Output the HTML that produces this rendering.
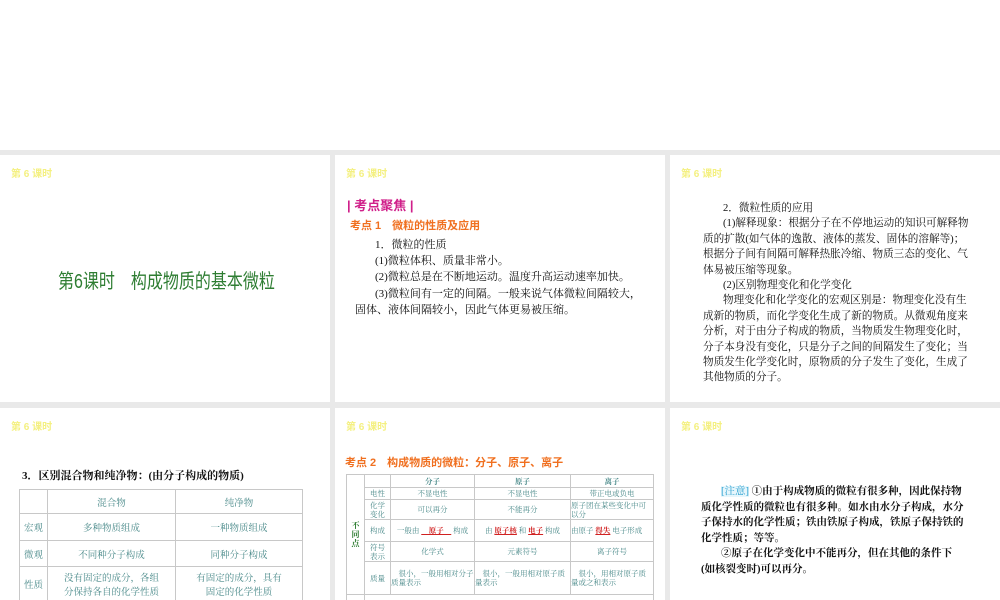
<!DOCTYPE html>
<html><head><meta charset="utf-8"><style>
*{margin:0;padding:0;box-sizing:border-box}
body{width:1000px;height:600px;background:#fff;position:relative;overflow:hidden;font-family:"Liberation Serif","Noto Serif CJK SC",serif;color:#111}
.band{position:absolute;left:0;top:150px;width:1000px;height:450px;background:#e9e9e9}
.s{position:absolute;background:#fff;overflow:hidden}
.h{position:absolute;left:11px;top:10px;font:bold 10px "Liberation Sans","Noto Sans CJK SC",sans-serif;color:#f4f080}
.t{position:absolute;font-size:11px;line-height:16.2px;white-space:nowrap}
.a{position:absolute;font-family:"Liberation Sans","Noto Sans CJK SC",sans-serif;font-weight:bold;white-space:nowrap}
table{border-collapse:collapse;position:absolute}
td{border:1px solid #c8c8c8;text-align:center;color:#4a8a8a;font-size:9.5px}
.t5 td{font-size:7.5px;line-height:9px}
.r{color:#d02020;text-decoration:underline;font-weight:bold}
</style></head><body>
<div class="band"></div>
<div class="s" style="left:0;top:155px;width:330px;height:247px">
<div class="h">第 6 课时</div>
<div class="a" style="left:58px;top:110px;font-size:20px;color:#2e7d32;font-weight:normal;transform:scaleX(0.8);transform-origin:left top">第6课时　构成物质的基本微粒</div>
</div>
<div class="s" style="left:335px;top:155px;width:330px;height:247px">
<div class="h">第 6 课时</div>
<div class="a" style="left:12px;top:40px;font-size:13px;color:#d0208a">| 考点聚焦 |</div>
<div class="a" style="left:15px;top:62px;font-size:11px;color:#f07020">考点 1　微粒的性质及应用</div>
<div class="t" style="left:20px;top:82px">
<div style="padding-left:20px">1．微粒的性质</div>
<div style="padding-left:20px">(1)微粒体积、质量非常小。</div>
<div style="padding-left:20px">(2)微粒总是在不断地运动。温度升高运动速率加快。</div>
<div style="padding-left:20px">(3)微粒间有一定的间隔。一般来说气体微粒间隔较大，</div>
<div>固体、液体间隔较小，因此气体更易被压缩。</div>
</div>
</div>
<div class="s" style="left:670px;top:155px;width:330px;height:247px">
<div class="h">第 6 课时</div>
<div class="t" style="left:33px;top:46px;font-size:10.6px;line-height:15.4px">
<div style="padding-left:20px">2．微粒性质的应用</div>
<div style="padding-left:20px">(1)解释现象：根据分子在不停地运动的知识可解释物</div>
<div>质的扩散(如气体的逸散、液体的蒸发、固体的溶解等)；</div>
<div>根据分子间有间隔可解释热胀冷缩、物质三态的变化、气</div>
<div>体易被压缩等现象。</div>
<div style="padding-left:20px">(2)区别物理变化和化学变化</div>
<div style="padding-left:20px">物理变化和化学变化的宏观区别是：物理变化没有生</div>
<div>成新的物质，而化学变化生成了新的物质。从微观角度来</div>
<div>分析，对于由分子构成的物质，当物质发生物理变化时，</div>
<div>分子本身没有变化，只是分子之间的间隔发生了变化；当</div>
<div>物质发生化学变化时，原物质的分子发生了变化，生成了</div>
<div>其他物质的分子。</div>
</div>
</div>
<div class="s" style="left:0;top:408px;width:330px;height:192px">
<div class="h">第 6 课时</div>
<div class="t" style="left:22px;top:60px;font-weight:bold">3．区别混合物和纯净物：(由分子构成的物质)</div>
<table style="left:19px;top:81px;width:284px">
<tr style="height:24px"><td style="width:28px"></td><td style="width:128px">混合物</td><td>纯净物</td></tr>
<tr style="height:27px"><td>宏观</td><td>多种物质组成</td><td>一种物质组成</td></tr>
<tr style="height:26px"><td>微观</td><td>不同种分子构成</td><td>同种分子构成</td></tr>
<tr style="height:34px"><td>性质</td><td>没有固定的成分，各组<br>分保持各自的化学性质</td><td>有固定的成分，具有<br>固定的化学性质</td></tr>
</table>
</div>
<div class="s" style="left:335px;top:408px;width:330px;height:192px">
<div class="h">第 6 课时</div>
<div class="a" style="left:10px;top:46px;font-size:11px;color:#f07020">考点 2　构成物质的微粒：分子、原子、离子</div>
<table class="t5" style="left:11px;top:66px;width:308px">
<tr style="height:13px"><td rowspan="6" style="width:18px;color:#2e7d32;font-weight:bold;font-size:8px">不<br>同<br>点</td><td style="width:26px"></td><td style="width:84px;font-weight:bold">分子</td><td style="width:96px;font-weight:bold">原子</td><td style="font-weight:bold">离子</td></tr>
<tr style="height:12px"><td>电性</td><td>不显电性</td><td>不显电性</td><td>带正电或负电</td></tr>
<tr style="height:20px"><td>化学<br>变化</td><td>可以再分</td><td>不能再分</td><td style="text-align:left">原子团在某些变化中可以分</td></tr>
<tr style="height:22px"><td>构成</td><td>一般由 <span class="r">　原子　</span> 构成</td><td>由 <span class="r">原子核</span> 和 <span class="r">电子</span> 构成</td><td style="text-align:left">由原子 <span class="r">得失</span> 电子形成</td></tr>
<tr style="height:20px"><td>符号<br>表示</td><td>化学式</td><td>元素符号</td><td>离子符号</td></tr>
<tr style="height:33px"><td>质量</td><td style="text-align:left">　很小，一般用相对分子质量表示</td><td style="text-align:left">　很小，一般用相对原子质量表示</td><td style="text-align:left">　很小，用相对原子质量或之和表示</td></tr>
<tr style="height:20px"><td></td><td colspan="4"></td></tr>
</table>
</div>
<div class="s" style="left:670px;top:408px;width:330px;height:192px">
<div class="h">第 6 课时</div>
<div class="t" style="left:31px;top:76px;font-size:10.5px;line-height:15.5px;font-weight:bold">
<div style="padding-left:20px"><span style="color:#2aa0d0;font-weight:normal;background:#e6f6fc">[注意]</span> ①由于构成物质的微粒有很多种，因此保持物</div>
<div>质化学性质的微粒也有很多种。如水由水分子构成，水分</div>
<div>子保持水的化学性质；铁由铁原子构成，铁原子保持铁的</div>
<div>化学性质；等等。</div>
<div style="padding-left:20px">②原子在化学变化中不能再分，但在其他的条件下</div>
<div>(如核裂变时)可以再分。</div>
</div>
</div>
</body></html>
